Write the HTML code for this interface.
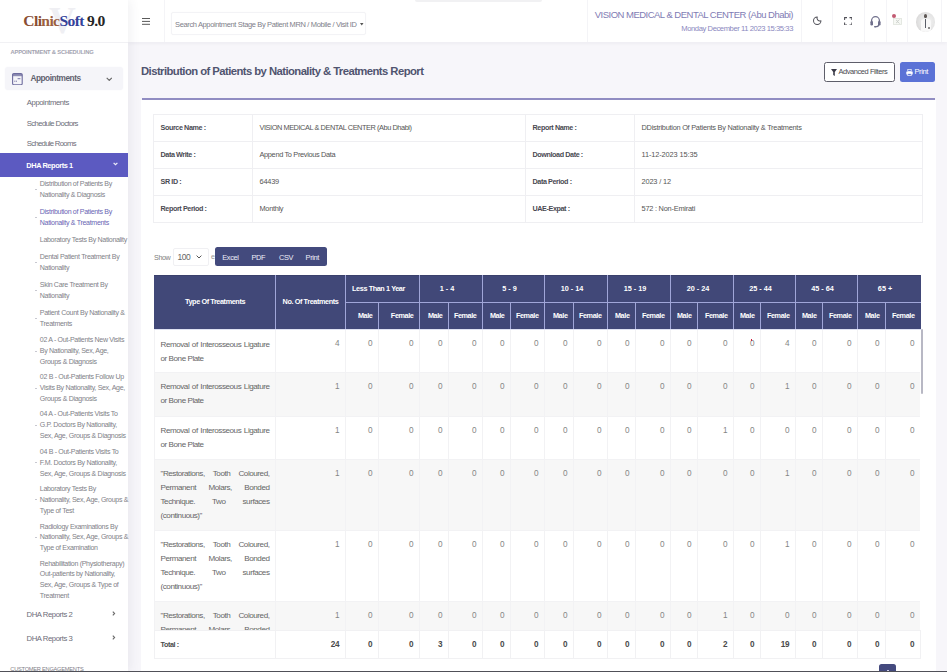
<!DOCTYPE html>
<html><head><meta charset="utf-8">
<style>
*{box-sizing:border-box;margin:0;padding:0}
html,body{width:947px;height:672px;overflow:hidden}
body{position:relative;background:#f7f6fa;font-family:"Liberation Sans",sans-serif;color:#555}
.a{position:absolute;white-space:nowrap}
*{letter-spacing:-0.055em}
#logo *{letter-spacing:0}
/* sidebar */
#sb{position:absolute;left:0;top:0;width:128px;height:672px;background:#fff;box-shadow:2px 0 10px rgba(60,60,90,.08);z-index:3}
#logo{position:absolute;left:0;top:0;width:128px;height:43px;border-bottom:1px solid #f1f1f4}
.lg{font-family:"Liberation Serif",serif;font-weight:700;font-size:15.6px;line-height:15.6px;left:23.3px;top:13.3px}
#logo .lg,#logo .lg *{letter-spacing:-0.04em}
.sec{font-size:5.8px;font-weight:700;color:#a3a3b0;letter-spacing:-0.035em}
.m1{font-size:7.73px;color:#6d6d78}
.m2{font-size:7.06px;letter-spacing:-0.045em;color:#818188;line-height:10.9px}
.dash{position:absolute;width:2px;height:1px;background:#c8c8d0}
/* header */
#hd{position:absolute;left:128px;top:0;width:819px;height:42px;background:#fff;box-shadow:0 1px 4px rgba(40,40,60,.06);z-index:2}
.vs{position:absolute;top:0;width:1px;height:42px;background:#f4f4f7}
/* content */
#card{position:absolute;left:141px;top:100px;width:795px;height:572px;background:#fff}

.info{position:absolute;left:153px;top:113.5px;width:769px;border-collapse:collapse;table-layout:fixed}
.info td{height:27px;border:1px solid #efeff2;font-size:7.39px;color:#555;padding:0 0 0 6.5px;white-space:nowrap;overflow:hidden}
.info td.lb{font-weight:700;color:#4a4a52;font-size:7.20px}
.ex{top:252.6px;font-size:7.4px;font-weight:400;color:#eeeef8;letter-spacing:-0.05em}
.dt{position:absolute;left:154px;width:766px;border-collapse:collapse;table-layout:fixed}
.hdr th{background:#414878;color:#fff;font-weight:700;font-size:7.28px;border:1px solid #a0a6d8;text-align:center;padding:0 8px 1px 0;white-space:nowrap;overflow:hidden}
.hdr th.mf{text-align:right;padding-right:5.5px;padding-bottom:1px}
.hdr th.rs{padding:0 0 2px 0}
.hdr tr:last-child th,.hdr th.rs{border-bottom-color:#dfe2f2}
.hdr tr:first-child th{border-top-color:#3a406c}
.hdr tr:first-child th:first-child{border-left-color:#414878}
.hdr tr:first-child th:last-child,.hdr tr:last-child th:last-child{border-right-color:#414878}
.bd td{border-left:1px solid #f2f2f4;border-right:1px solid #f2f2f4;font-size:8.18px;color:#858585;text-align:right;vertical-align:top;padding:9.4px 6px 0 0}
.bd tr.st td{background:#f7f7f7}
.bd tr td{border-bottom:1px solid #f2f2f4}
.bd td.tx{white-space:normal;text-align:justify;padding:7.6px 5.5px 0 5.5px;line-height:14.1px;font-size:8.09px;color:#666}
.ft td{border:1px solid #f1f1f3;font-size:8.18px;color:#4a4a4a;font-weight:700;text-align:right;padding:0 6px 0 0;height:28px}
.ft td.tx{text-align:left;padding-left:5.5px;font-size:7.17px}
</style></head><body>

<div id="sb">
  <div id="logo">
    <div class="a" style="left:49px;top:-1px;font-family:'Liberation Serif',serif;font-weight:700;font-size:37px;color:#efeff3">V</div>
    <div class="a lg"><span style="color:#8a4d32">Cli</span><span style="color:#9c6040">nic</span><span style="color:#34429a">Soft</span> <span style="color:#262626">9.0</span></div>
  </div>
  <div class="a sec" style="left:10.5px;top:48.7px">APPOINTMENT &amp; SCHEDULING</div>
  <div class="a" style="left:4.7px;top:66.7px;width:118px;height:23px;background:#f5f5f9;border-radius:3px;box-shadow:0 0 2px #f7f7fa"></div>
  <svg class="a" style="left:12px;top:72.5px" width="11" height="12.5" viewBox="0 0 11 12.5"><rect x="0.6" y="0.6" width="9.6" height="11.2" rx="1.2" fill="none" stroke="#6e6c9e" stroke-width="1.1"/><rect x="0.6" y="1" width="9.6" height="2.2" fill="#6e6c9e" opacity=".75"/><rect x="2.3" y="7.7" width="1" height="1" fill="#6e6c9e"/><rect x="3.9" y="7.7" width="1" height="1" fill="#6e6c9e"/><line x1="5.6" y1="5.7" x2="8.4" y2="5.7" stroke="#6e6c9e" stroke-width=".9"/></svg>
  <div class="a" style="left:30.4px;top:72.7px;font-size:8.29px;font-weight:700;color:#62626f">Appointments</div>
  <svg class="a" style="left:105.5px;top:76.5px" width="6.5" height="4.5" viewBox="0 0 6.5 4.5"><polyline points="0.7,0.8 3.25,3.4 5.8,0.8" fill="none" stroke="#666" stroke-width="1.1"/></svg>
  <div class="a m1" style="left:26.8px;top:98.4px">Appointments</div>
  <div class="a m1" style="left:26.8px;top:118.6px;letter-spacing:-0.08em">Schedule Doctors</div>
  <div class="a m1" style="left:26.8px;top:139px;letter-spacing:-0.09em">Schedule Rooms</div>
  <div class="a" style="left:0;top:153px;width:128px;height:24.2px;background:#5c5ac1"></div>
  <div class="a" style="left:26.3px;top:161px;font-size:7.39px;font-weight:700;color:#fff">DHA Reports 1</div>
  <svg class="a" style="left:112.5px;top:162.3px" width="5" height="4" viewBox="0 0 5 4"><polyline points="0.6,0.8 2.5,2.7 4.4,0.8" fill="none" stroke="#eeeefa" stroke-width="1.2"/></svg>

  <div class="a m2" style="left:39.8px;top:178.8px">Distribution of Patients By<br>Nationality &amp; Diagnosis</div>
  <div class="dash" style="left:35px;top:189px"></div>
  <div class="a m2" style="left:39.8px;top:207.0px;color:#6a66b4">Distribution of Patients By<br>Nationality &amp; Treatments</div>
  <div class="dash" style="left:35px;top:216.5px"></div>
  <div class="a m2" style="left:39.8px;top:235.0px">Laboratory Tests By Nationality</div>
  <div class="a m2" style="left:39.8px;top:252.0px">Dental Patient Treatment By<br>Nationality</div>
  <div class="dash" style="left:35px;top:261.5px"></div>
  <div class="a m2" style="left:39.8px;top:280.0px">Skin Care Treatment By<br>Nationality</div>
  <div class="dash" style="left:35px;top:289.5px"></div>
  <div class="a m2" style="left:39.8px;top:308.0px">Patient Count By Nationality &amp;<br>Treatments</div>
  <div class="dash" style="left:35px;top:317.5px"></div>
  <div class="a m2" style="left:39.8px;top:335.0px">02 A - Out-Patients New Visits<br>By Nationality, Sex, Age,<br>Groups &amp; Diagnosis</div>
  <div class="dash" style="left:35px;top:350.5px"></div>
  <div class="a m2" style="left:39.8px;top:372.2px">02 B - Out-Patients Follow Up<br>Visits By Nationality, Sex, Age,<br>Groups &amp; Diagnosis</div>
  <div class="dash" style="left:35px;top:388px"></div>
  <div class="a m2" style="left:39.8px;top:409.4px">04 A - Out-Patients Visits To<br>G.P. Doctors By Nationality,<br>Sex, Age, Groups &amp; Diagnosis</div>
  <div class="dash" style="left:35px;top:425px"></div>
  <div class="a m2" style="left:39.8px;top:447.0px">04 B - Out-Patients Visits To<br>F.M. Doctors By Nationality,<br>Sex, Age, Groups &amp; Diagnosis</div>
  <div class="dash" style="left:35px;top:462px"></div>
  <div class="a m2" style="left:39.8px;top:484.0px">Laboratory Tests By<br>Nationality, Sex, Age, Groups &amp;<br>Type of Test</div>
  <div class="dash" style="left:35px;top:499px"></div>
  <div class="a m2" style="left:39.8px;top:521.5px">Radiology Examinations By<br>Nationality, Sex, Age, Groups &amp;<br>Type of Examination</div>
  <div class="dash" style="left:35px;top:537px"></div>
  <div class="a m2" style="left:39.8px;top:558.5px">Rehabilitation (Physiotherapy)<br>Out-patients by Nationality,<br>Sex, Age, Groups &amp; Type of<br>Treatment</div>

  <div class="a m1" style="left:26.5px;top:610px">DHA Reports 2</div>
  <svg class="a" style="left:112.2px;top:611px" width="4" height="5" viewBox="0 0 4 5"><polyline points="0.8,0.6 2.6,2.5 0.8,4.4" fill="none" stroke="#6a6a6a" stroke-width="1.1"/></svg>
  <div class="a m1" style="left:26.5px;top:634px">DHA Reports 3</div>
  <svg class="a" style="left:112.2px;top:635px" width="4" height="5" viewBox="0 0 4 5"><polyline points="0.8,0.6 2.6,2.5 0.8,4.4" fill="none" stroke="#6a6a6a" stroke-width="1.1"/></svg>
  <div class="a sec" style="left:10.3px;top:665.5px;font-weight:400;color:#808088;font-size:5.7px;letter-spacing:-0.045em">CUSTOMER ENGAGEMENTS</div>
</div>

<div id="hd">
  <div class="vs" style="left:36px"></div>
  <div class="a" style="left:14px;top:18px;width:8px;height:1.2px;background:#5a5a5a;box-shadow:0 2.9px 0 #5a5a5a,0 5.8px 0 #5a5a5a"></div>
  <div class="a" style="left:42.5px;top:12.3px;width:195px;height:23px;border:1px solid #f3f3f6;border-radius:2px;background:#fff;box-shadow:0 0 2px rgba(0,0,0,.02)"></div>
  <div class="a" style="left:47px;top:20px;font-size:7.50px;letter-spacing:-0.048em;color:#80808a">Search Appointment Stage By Patient MRN / Mobile / Visit ID</div>
  <svg class="a" style="left:232.4px;top:23px" width="3.5" height="3" viewBox="0 0 3.5 3"><path d="M0 0H3.5L1.75 2.6Z" fill="#555"/></svg>
  <div class="a" style="left:287px;top:0;width:127px;height:2px;background:#f1f1f3;border-radius:0 0 3px 3px"></div>
  <div class="vs" style="left:459px"></div>
  <div class="a" style="right:154px;top:9.2px;font-size:9.5px;letter-spacing:-0.054em;color:#7f7cb4">VISION MEDICAL &amp; DENTAL CENTER (Abu Dhabi)</div>
  <div class="a" style="right:154px;top:24.3px;font-size:7.62px;color:#8b88c0">Monday December 11 2023 15:35:33</div>
  <div class="vs" style="left:673px"></div>
  <div class="vs" style="left:703.8px"></div>
  <div class="vs" style="left:736px"></div>
  <div class="vs" style="left:757.5px"></div>
  <div class="vs" style="left:778.7px"></div>
  <div class="vs" style="left:812.8px"></div>
  <svg class="a" style="left:683.5px;top:15.3px" width="10.5" height="10.5" viewBox="0 0 24 24"><path d="M12 4.5A8.5 8.5 0 1 0 20.5 13A6.5 6.5 0 0 1 12 4.5Z" fill="none" stroke="#505058" stroke-width="2.3" stroke-linejoin="round"/></svg>
  <svg class="a" style="left:715.8px;top:16.6px" width="8.5" height="8.5" viewBox="0 0 8.5 8.5"><path d="M0.6 3V0.6H3M5.5 0.6H7.9V3M7.9 5.5V7.9H5.5M3 7.9H0.6V5.5" fill="none" stroke="#505058" stroke-width="1.05"/></svg>
  <svg class="a" style="left:741.5px;top:14.5px" width="11" height="13" viewBox="0 0 11 13"><path d="M1.6 7.5 V5.6 A3.9 3.9 0 0 1 9.4 5.6 V7.5" fill="none" stroke="#70708c" stroke-width="1.3"/><rect x="0.4" y="6" width="2.6" height="4.4" rx="1.2" fill="#70708c"/><rect x="8" y="6" width="2.6" height="4.4" rx="1.2" fill="#70708c"/><path d="M8.8 10 Q8.3 11.8 5.2 11.8" fill="none" stroke="#70708c" stroke-width="1.1"/><rect x="4" y="11.1" width="2.2" height="1.4" rx=".7" fill="#70708c"/></svg>
  <div class="a" style="left:763.7px;top:14px;width:4.2px;height:4.2px;border-radius:50%;background:#c25a72"></div>
  <svg class="a" style="left:764.5px;top:17.5px" width="9" height="7" viewBox="0 0 9 7"><rect x="0.5" y="0.5" width="8" height="6" fill="#f6f8f4" stroke="#dfe3dc" stroke-width=".8"/><path d="M3 2 L5 3.5 L3 5 M6.5 1.5 L4.5 3.5 L6.5 5.5" fill="none" stroke="#c8ccc8" stroke-width=".8"/></svg>
  <div class="a" style="left:787.5px;top:12px;width:19px;height:19.5px;border-radius:50%;background:radial-gradient(circle at 60% 50%,#f3f3f3 0,#e4e4e4 55%,#cfcdcd 100%);overflow:hidden">
    <div class="a" style="left:8.3px;top:2px;width:3.6px;height:4.2px;border-radius:50% 50% 45% 45%;background:#5e5855"></div>
    <div class="a" style="left:5px;top:7px;width:10px;height:13px;border-radius:3px 3px 0 0;background:#f8f8f8"></div>
    <div class="a" style="left:9.6px;top:6.5px;width:1.1px;height:9.5px;background:#5a5e68"></div>
    <div class="a" style="left:12px;top:14.8px;width:2.2px;height:1.8px;border-radius:1px;background:#6a6a6a"></div>
  </div>
</div>

<div id="card"></div>
<div class="a" style="left:141px;top:64.5px;font-size:11.31px;font-weight:700;color:#50546f;letter-spacing:-0.05em">Distribution of Patients by Nationality &amp; Treatments Report</div>
<div class="a" style="left:824px;top:62.3px;width:71px;height:19.6px;border:1px solid #5e5e6a;border-radius:2.5px;background:#fff"></div>
<svg class="a" style="left:831px;top:68.5px" width="6" height="7" viewBox="0 0 6 7"><path d="M0 0H6L3.8 3V7L2.2 6V3Z" fill="#3a3a48"/></svg>
<div class="a" style="left:838.5px;top:66.8px;font-size:7.45px;color:#4a4a50">Advanced Filters</div>
<div class="a" style="left:899.6px;top:62.3px;width:35.8px;height:19.6px;border-radius:2.5px;background:#5b72d6"></div>
<svg class="a" style="left:906px;top:68.5px" width="7" height="7" viewBox="0 0 7 7"><rect x="1.8" y="0.3" width="3.4" height="2" fill="none" stroke="#fff" stroke-width=".7"/><rect x="0.3" y="2.5" width="6.4" height="3" rx=".6" fill="#fff"/><rect x="1.8" y="4.5" width="3.4" height="2.2" fill="#5b72d6" stroke="#fff" stroke-width=".7"/></svg>
<div class="a" style="left:914.5px;top:66.8px;font-size:7.5px;color:#fff">Print</div>
<div class="a" style="left:142px;top:98px;width:793px;height:2px;background:#918dc2"></div>
<table class="info">
<colgroup><col style="width:99px"><col style="width:273px"><col style="width:109px"><col style="width:288px"></colgroup>
<tr><td class="lb">Source Name :</td><td style="letter-spacing:-0.06em">VISION MEDICAL &amp; DENTAL CENTER (Abu Dhabi)</td><td class="lb">Report Name :</td><td style="letter-spacing:-0.035em">DDistribution Of Patients By Nationality &amp; Treatments</td></tr>
<tr><td class="lb">Data Write :</td><td style="letter-spacing:-0.045em">Append To Previous Data</td><td class="lb">Download Date :</td><td style="letter-spacing:-0.015em">11-12-2023 15:35</td></tr>
<tr><td class="lb">SR ID :</td><td style="letter-spacing:-0.03em">64439</td><td class="lb">Data Period :</td><td style="letter-spacing:-0.02em">2023 / 12</td></tr>
<tr><td class="lb">Report Period :</td><td style="letter-spacing:-0.04em">Monthly</td><td class="lb">UAE-Expat :</td><td style="letter-spacing:-0.03em">572 : Non-Emirati</td></tr>
</table>
<div class="a" style="left:154px;top:253.6px;font-size:7.17px;color:#808080">Show</div>
<div class="a" style="left:173px;top:247.6px;width:36px;height:18px;border:1px solid #f0f0f3;border-radius:2px;background:#fff"></div>
<div class="a" style="left:177.5px;top:252px;font-size:8.51px;color:#666">100</div>
<svg class="a" style="left:196px;top:255px" width="6" height="4" viewBox="0 0 6 4"><polyline points="0.6,0.6 3,3 5.4,0.6" fill="none" stroke="#555" stroke-width="1"/></svg>
<div class="a" style="left:211px;top:253px;font-size:7.17px;color:#999">e</div>
<div class="a" style="left:215.3px;top:247.4px;width:112px;height:18.7px;border-radius:2.5px;background:#434a7d"></div>
<div class="a ex" style="left:222.3px">Excel</div>
<div class="a ex" style="left:251.4px">PDF</div>
<div class="a ex" style="left:279px">CSV</div>
<div class="a ex" style="left:305.6px">Print</div>
<table class="dt hdr" style="top:274.6px;height:54.6px"><colgroup><col style="width:121px"><col style="width:70px"><col style="width:33px"><col style="width:41px"><col style="width:29px"><col style="width:34px"><col style="width:28px"><col style="width:34px"><col style="width:29px"><col style="width:34px"><col style="width:28px"><col style="width:35px"><col style="width:27px"><col style="width:36px"><col style="width:27px"><col style="width:35px"><col style="width:27px"><col style="width:35px"><col style="width:28px"><col style="width:35px"></colgroup><tr style="height:27.4px"><th rowspan="2" class="rs">Type Of Treatments</th><th rowspan="2" class="rs">No. Of Treatments</th><th colspan="2">Less Than 1 Year</th><th colspan="2" style="letter-spacing:0">1 - 4</th><th colspan="2" style="letter-spacing:0">5 - 9</th><th colspan="2" style="letter-spacing:0">10 - 14</th><th colspan="2" style="letter-spacing:0">15 - 19</th><th colspan="2" style="letter-spacing:0">20 - 24</th><th colspan="2" style="letter-spacing:0">25 - 44</th><th colspan="2" style="letter-spacing:0">45 - 64</th><th colspan="2" style="letter-spacing:0">65 +</th></tr><tr style="height:27px"><th class="mf">Male</th><th class="mf">Female</th><th class="mf">Male</th><th class="mf">Female</th><th class="mf">Male</th><th class="mf">Female</th><th class="mf">Male</th><th class="mf">Female</th><th class="mf">Male</th><th class="mf">Female</th><th class="mf">Male</th><th class="mf">Female</th><th class="mf">Male</th><th class="mf">Female</th><th class="mf">Male</th><th class="mf">Female</th><th class="mf">Male</th><th class="mf">Female</th></tr></table><div class="a" style="left:154px;top:330px;width:766px;height:300px;overflow:hidden"><table class="dt bd" style="left:0;top:0"><colgroup><col style="width:121px"><col style="width:70px"><col style="width:33px"><col style="width:41px"><col style="width:29px"><col style="width:34px"><col style="width:28px"><col style="width:34px"><col style="width:29px"><col style="width:34px"><col style="width:28px"><col style="width:35px"><col style="width:27px"><col style="width:36px"><col style="width:27px"><col style="width:35px"><col style="width:27px"><col style="width:35px"><col style="width:28px"><col style="width:35px"></colgroup><tr style="height:42px" class=""><td class="tx">Removal of Interosseous Ligature or Bone Plate</td><td>4</td><td>0</td><td>0</td><td>0</td><td>0</td><td>0</td><td>0</td><td>0</td><td>0</td><td>0</td><td>0</td><td>0</td><td>0</td><td>0</td><td>4</td><td>0</td><td>0</td><td>0</td><td>0</td></tr><tr style="height:44px" class="st"><td class="tx">Removal of Interosseous Ligature or Bone Plate</td><td>1</td><td>0</td><td>0</td><td>0</td><td>0</td><td>0</td><td>0</td><td>0</td><td>0</td><td>0</td><td>0</td><td>0</td><td>0</td><td>0</td><td>1</td><td>0</td><td>0</td><td>0</td><td>0</td></tr><tr style="height:43px" class=""><td class="tx">Removal of Interosseous Ligature or Bone Plate</td><td>1</td><td>0</td><td>0</td><td>0</td><td>0</td><td>0</td><td>0</td><td>0</td><td>0</td><td>0</td><td>0</td><td>0</td><td>1</td><td>0</td><td>0</td><td>0</td><td>0</td><td>0</td><td>0</td></tr><tr style="height:71px" class="st"><td class="tx">"Restorations, Tooth Coloured, Permanent Molars, Bonded Technique. Two surfaces (continuous)"</td><td>1</td><td>0</td><td>0</td><td>0</td><td>0</td><td>0</td><td>0</td><td>0</td><td>0</td><td>0</td><td>0</td><td>0</td><td>0</td><td>0</td><td>1</td><td>0</td><td>0</td><td>0</td><td>0</td></tr><tr style="height:71px" class=""><td class="tx">"Restorations, Tooth Coloured, Permanent Molars, Bonded Technique. Two surfaces (continuous)"</td><td>1</td><td>0</td><td>0</td><td>0</td><td>0</td><td>0</td><td>0</td><td>0</td><td>0</td><td>0</td><td>0</td><td>0</td><td>0</td><td>0</td><td>1</td><td>0</td><td>0</td><td>0</td><td>0</td></tr><tr style="height:71px" class="st"><td class="tx">"Restorations, Tooth Coloured, Permanent Molars, Bonded Technique. Two surfaces (continuous)"</td><td>1</td><td>0</td><td>0</td><td>0</td><td>0</td><td>0</td><td>0</td><td>0</td><td>0</td><td>0</td><td>0</td><td>0</td><td>1</td><td>0</td><td>0</td><td>0</td><td>0</td><td>0</td><td>0</td></tr></table></div><table class="dt ft" style="top:630px;height:28px"><colgroup><col style="width:121px"><col style="width:70px"><col style="width:33px"><col style="width:41px"><col style="width:29px"><col style="width:34px"><col style="width:28px"><col style="width:34px"><col style="width:29px"><col style="width:34px"><col style="width:28px"><col style="width:35px"><col style="width:27px"><col style="width:36px"><col style="width:27px"><col style="width:35px"><col style="width:27px"><col style="width:35px"><col style="width:28px"><col style="width:35px"></colgroup><tr><td class="tx">Total :</td><td>24</td><td>0</td><td>0</td><td>3</td><td>0</td><td>0</td><td>0</td><td>0</td><td>0</td><td>0</td><td>0</td><td>0</td><td>2</td><td>0</td><td>19</td><td>0</td><td>0</td><td>0</td><td>0</td></tr></table>
<div class="a" style="left:921px;top:329px;width:2px;height:65px;background:#b8b8c4;border-radius:1px"></div>
<div class="a" style="left:750.5px;top:338.5px;width:1.5px;height:2px;background:#d02040"></div>
<div class="a" style="left:879.1px;top:664px;width:16.6px;height:10px;border-radius:2.5px;background:#444a7e"></div>
<svg class="a" style="left:884.5px;top:668.5px" width="6" height="4" viewBox="0 0 6 4"><polyline points="0.8,3.5 3,1 5.2,3.5" fill="none" stroke="#d8daf0" stroke-width="1"/></svg>
<div class="a" style="left:0;top:670.5px;width:947px;height:1.5px;background:#505058;z-index:10"></div>


</body></html>
